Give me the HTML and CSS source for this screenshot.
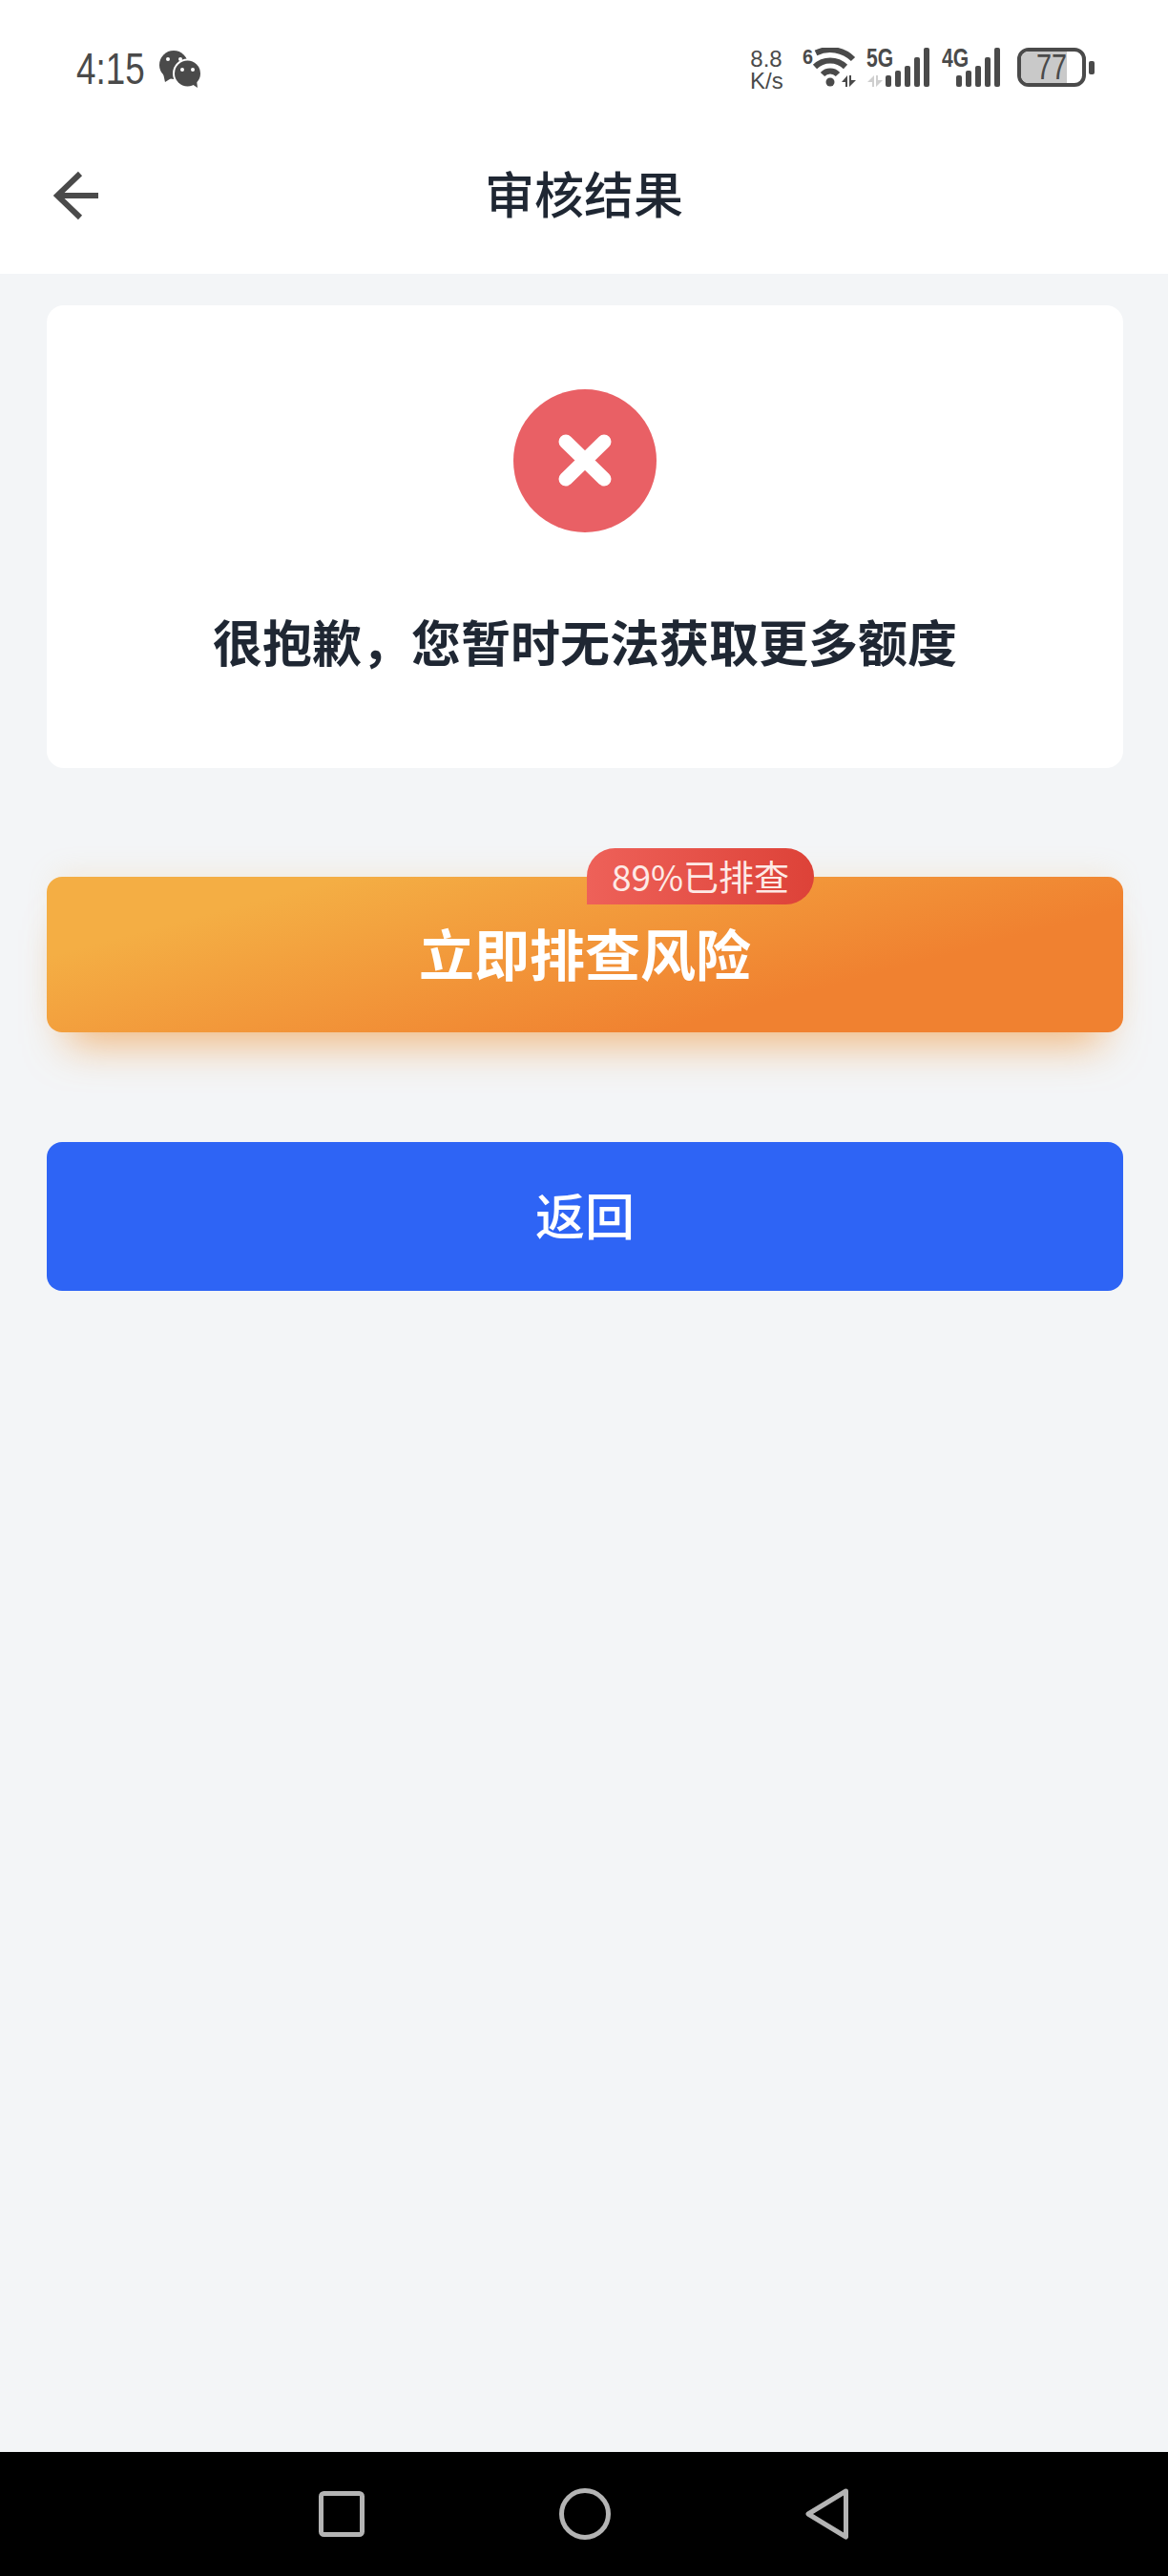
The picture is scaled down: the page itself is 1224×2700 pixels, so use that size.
FILE: index.html
```html
<html>
<head>
    <title>审核结果</title>
    <link rel="stylesheet" href="styles.css">
</head>
<body>
    <div class="page">
        <div class="top">
            <div class="status-bar">
                <span class="time">4:15</span>
                <svg class="wechat" width="44" height="39" viewBox="0 0 44 39">
                    <circle cx="15" cy="15" r="15" fill="#4a4a4a"/>
                    <path d="M4 24l2 9 8-5z" fill="#4a4a4a"/>
                    <circle cx="29.500" cy="24" r="15.500" fill="#fff"/>
                    <circle cx="29.500" cy="24" r="13.500" fill="#4a4a4a"/>
                    <path d="M34 35l6 4-1-8z" fill="#4a4a4a"/>
                    <circle cx="9" cy="9" r="2" fill="#fff"/>
                    <circle cx="22" cy="9" r="2" fill="#fff"/>
                    <circle cx="24" cy="20" r="2" fill="#fff"/>
                    <circle cx="35" cy="20" r="2" fill="#fff"/>
                </svg>
                <div class="status-right">
                    <div class="net-speed">
                        <span>8.8</span>
                        <span>K/s</span>
                    </div>
                    <div class="sig wifi">
                        <span class="sig-label sig-small">6</span>
                        <svg width="56" height="42" viewBox="0 0 56 42">
                            <path d="M14 5.500A34 34 0 0 1 53 12" class="wifi-arc"/>
                            <path d="M13 20A23 23 0 0 1 45 20" class="wifi-arc"/>
                            <path d="M21 28A11 11 0 0 1 37 28" class="wifi-arc"/>
                            <circle cx="29" cy="36" r="4.500" fill="#4a4a4a"/>
                            <path d="M47 29v12h-2v-5h-4zM49 29h2v5h5l-7 7z" fill="#4a4a4a"/>
                        </svg>
                    </div>
                    <div class="sig signal">
                        <span class="sig-label">5G</span>
                        <svg width="66" height="41" viewBox="0 0 66 41">
                            <path d="M8 29v12H6v-5H1zM10 29h2v5h5l-7 7z" fill="#cfcfcf"/>
                            <rect x="20" y="29" width="6" height="12" rx="2" fill="#4a4a4a"/>
                            <rect x="30" y="24" width="6" height="17" rx="2" fill="#4a4a4a"/>
                            <rect x="40" y="19" width="6" height="22" rx="2" fill="#4a4a4a"/>
                            <rect x="50" y="10" width="6" height="31" rx="2" fill="#4a4a4a"/>
                            <rect x="60" y="0" width="6" height="41" rx="2" fill="#4a4a4a"/>
                        </svg>
                    </div>
                    <div class="sig signal signal-4g">
                        <span class="sig-label">4G</span>
                        <svg width="61" height="41" viewBox="0 0 61 41">
                            <rect x="15" y="29" width="6" height="12" rx="2" fill="#4a4a4a"/>
                            <rect x="25" y="24" width="6" height="17" rx="2" fill="#4a4a4a"/>
                            <rect x="35" y="19" width="6" height="22" rx="2" fill="#4a4a4a"/>
                            <rect x="45" y="10" width="6" height="31" rx="2" fill="#4a4a4a"/>
                            <rect x="55" y="0" width="6" height="41" rx="2" fill="#4a4a4a"/>
                        </svg>
                    </div>
                    <div class="battery">
                        <div class="battery-body">
                            <div class="battery-fill"></div>
                            <span class="battery-num">77</span>
                        </div>
                        <div class="battery-nub"></div>
                    </div>
                </div>
            </div>
            <div class="title-bar">
                <svg class="back" width="48" height="54" viewBox="0 0 48 54">
                    <path d="M28 4L4 27l24 23M4 27h43" fill="none" stroke="#4a4a4a" stroke-width="6"/>
                </svg>
                <h1 class="title">审核结果</h1>
            </div>
        </div>

        <div class="content">
            <div class="card">
                <svg class="fail-icon" width="150" height="150" viewBox="0 0 150 150">
                    <circle cx="75" cy="75" r="75" fill="#e96065"/>
                    <path d="M55 55L95 94M95 55L55 94" stroke="#fff" stroke-width="15" stroke-linecap="round"/>
                </svg>
                <div class="card-text">很抱歉，您暂时无法获取更多额度</div>
            </div>

            <div class="btn btn-orange">
                <span class="badge">89%已排查</span>
                立即排查风险
            </div>
            <div class="btn btn-blue">返回</div>
        </div>

        <div class="nav-bar">
            <svg width="48" height="48" viewBox="0 0 48 48">
                <rect x="2.500" y="2.500" width="43" height="43" rx="3" class="nav-icon"/>
            </svg>
            <svg width="54" height="54" viewBox="0 0 54 54">
                <circle cx="27" cy="27" r="24.500" class="nav-icon"/>
            </svg>
            <svg width="46" height="54" viewBox="0 0 46 54">
                <path d="M42.500 3L3 27l39.500 24z" class="nav-icon" stroke-linejoin="round"/>
            </svg>
        </div>
    </div>
</body>
</html>
```

FILE: styles.css
```css
body {
    margin: 0;
    font-family: "Noto Sans CJK SC", "Noto Sans", sans-serif;
    background-color: #f3f5f7;
}

.page {
    display: flex;
    flex-direction: column;
    height: 2700px;
}

.top {
    background: #fff;
}

.status-bar {
    display: flex;
    align-items: flex-start;
    height: 120px;
    box-sizing: border-box;
    padding: 50px 77px 0 80px;
    color: #4a4a4a;
}

.time {
    width: 72px;
    font-family: "Liberation Sans", sans-serif;
    font-size: 46px;
    line-height: 44px;
    white-space: nowrap;
    transform: scaleX(0.8);
    transform-origin: left;
}

.wechat {
    margin: 3px 0 0 15px;
}

.status-right {
    display: flex;
    align-items: flex-start;
    margin-left: auto;
}

.net-speed {
    display: flex;
    flex-direction: column;
    width: 34px;
    font-family: "Liberation Sans", sans-serif;
    font-size: 24px;
    line-height: 23px;
    text-align: center;
    white-space: nowrap;
}

.sig {
    position: relative;
    display: flex;
}

.sig-label {
    position: absolute;
    left: 0;
    top: 0;
    font-family: "Liberation Sans", sans-serif;
    font-size: 27px;
    font-weight: bold;
    line-height: 22px;
    white-space: nowrap;
    transform: scaleX(0.78);
    transform-origin: left;
}

.sig-small {
    font-size: 22px;
    line-height: 19px;
    transform: scaleX(0.9);
}

.wifi {
    margin-left: 21px;
}

.wifi-arc {
    fill: none;
    stroke: #4a4a4a;
    stroke-width: 6;
}

.signal {
    margin-left: 11px;
}

.signal-4g {
    margin-left: 13px;
}

.battery {
    display: flex;
    align-items: center;
    margin-left: 18px;
}

.battery-body {
    position: relative;
    display: flex;
    justify-content: center;
    width: 72px;
    height: 41px;
    box-sizing: border-box;
    border: 4px solid #4a4a4a;
    border-radius: 12px;
    overflow: hidden;
}

.battery-fill {
    position: absolute;
    left: 0;
    top: 0;
    bottom: 0;
    width: 48px;
    background: #c9c9c9;
}

.battery-num {
    position: relative;
    font-family: "Liberation Sans", sans-serif;
    font-size: 36px;
    line-height: 33px;
    transform: scaleX(0.8);
}

.battery-nub {
    width: 6px;
    height: 14px;
    margin-left: 3px;
    border-radius: 2px;
    background: #4a4a4a;
}

.title-bar {
    position: relative;
    display: flex;
    justify-content: center;
    align-items: center;
    height: 167px;
    box-sizing: border-box;
    padding-bottom: 4px;
}

.back {
    position: absolute;
    left: 56px;
    top: 58px;
}

.title {
    margin: 0;
    font-size: 52px;
    font-weight: 500;
    line-height: 60px;
    color: #1f2733;
}

.content {
    flex: 1;
    padding: 33px 47px 0 49px;
}

.card {
    display: flex;
    flex-direction: column;
    align-items: center;
    height: 485px;
    box-sizing: border-box;
    padding-top: 88px;
    background: #fff;
    border-radius: 18px;
}

.card-text {
    margin-top: 78px;
    font-size: 52px;
    font-weight: bold;
    line-height: 72px;
    color: #1f2733;
}

.btn {
    display: flex;
    justify-content: center;
    align-items: center;
    box-sizing: border-box;
    border-radius: 16px;
    color: #fff;
    font-weight: bold;
}

.btn-orange {
    position: relative;
    height: 163px;
    margin-top: 114px;
    padding-bottom: 6px;
    font-size: 58px;
    background: linear-gradient(165deg, #f4ae44 18%, #f08130 72%);
    box-shadow: 0 34px 44px -22px rgba(240, 150, 60, 0.65), 0 -12px 30px -10px rgba(240, 190, 120, 0.22);
}

.badge {
    position: absolute;
    left: 566px;
    top: -30px;
    width: 238px;
    height: 59px;
    line-height: 59px;
    text-align: center;
    font-size: 37px;
    font-weight: normal;
    color: #fdeae6;
    background: linear-gradient(90deg, #ee6159, #dd4238);
    border-radius: 30px 30px 30px 0;
}

.btn-blue {
    height: 156px;
    margin-top: 115px;
    padding-bottom: 6px;
    font-size: 52px;
    font-weight: 500;
    background: #2e64f5;
}

.nav-bar {
    display: flex;
    justify-content: center;
    align-items: center;
    gap: 204px;
    height: 130px;
    background: #000;
}

.nav-icon {
    fill: none;
    stroke: #b4b4b4;
    stroke-width: 5;
}
```
